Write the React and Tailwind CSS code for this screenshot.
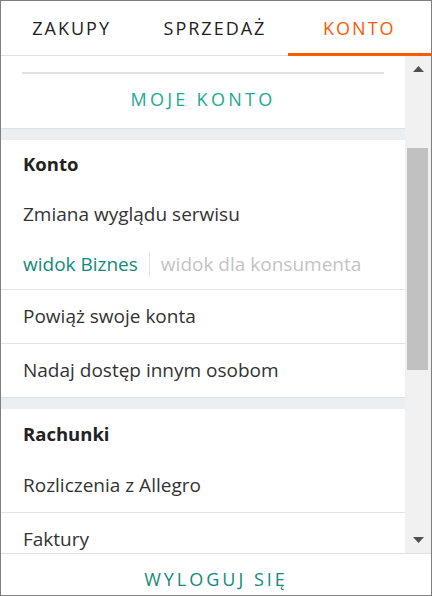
import React from "react";

const tabs = [
  { label: "ZAKUPY", active: false },
  { label: "SPRZEDAŻ", active: false },
  { label: "KONTO", active: true },
];

const Tabs = () => (
  <div className="grid grid-cols-3 h-[55px] border-b border-[#e0e0e0] shrink-0">
    {tabs.map((t) => (
      <div
        key={t.label}
        className={
          t.active
            ? "flex items-center justify-center text-[18px] tracking-[2px] text-[#ff5a00] border-b-[3px] border-[#ff5a00] -mb-px pt-[2px]"
            : "flex items-center justify-center text-[18px] tracking-[2px] text-[#222222] pr-[2px]"
        }
      >
        {t.label}
      </div>
    ))}
  </div>
);

const Scrollbar = () => (
  <div className="w-[26px] shrink-0 bg-[#f1f1f1] flex flex-col">
    <div className="h-[26px] flex items-center justify-center">
      <svg width="11" height="6" viewBox="0 0 11 6">
        <polygon points="5.5,0 11,6 0,6" fill="#505050" />
      </svg>
    </div>
    <div className="flex-1 pl-[2px] pr-[3px]">
      <div className="mt-[66px] h-[222px] bg-[#c1c1c1]" />
    </div>
    <div className="h-[26px] flex items-center justify-center">
      <svg width="11" height="6" viewBox="0 0 11 6">
        <polygon points="0,0 11,0 5.5,6" fill="#505050" />
      </svg>
    </div>
  </div>
);

const Band = () => (
  <div className="h-[12px] bg-[#eceff1] border-t border-[#dfe1e3]" />
);

const App = () => {
  return (
    <div
      className="w-[432px] h-[596px] border border-[#7f7f7f] bg-white flex flex-col overflow-hidden"
      style={{ fontFamily: "'Open Sans', 'Noto Sans', sans-serif" }}
    >
      <Tabs />

      <div className="flex flex-1 min-h-0">
        <div className="flex-1 overflow-hidden">
          <div className="mx-[21px] mt-[16px] h-[2px] bg-[#e1e1e1]" />
          <div className="h-[54px] pb-[3px] flex items-center justify-center text-[18px] tracking-[3.3px] text-[#1aa994]">
            MOJE KONTO
          </div>
          <Band />

          {/* Konto */}
          <div className="h-[48px] flex items-center px-[22px] text-[18.5px] font-bold text-[#222222]">
            Konto
          </div>
          <div className="h-[52px] flex items-center px-[22px] text-[19px] text-[#333333]">
            Zmiana wyglądu serwisu
          </div>
          <div className="h-[50px] flex items-center px-[22px] text-[19px] border-b border-[#e5e5e5]">
            <span className="text-[#138a77]">widok Biznes</span>
            <span className="mx-[11px] w-px h-[24px] bg-[#e2e2e2]" />
            <span className="text-[#c4c4c4]">widok dla konsumenta</span>
          </div>
          <div className="h-[54px] flex items-center px-[22px] text-[19px] text-[#333333] border-b border-[#e5e5e5]">
            Powiąż swoje konta
          </div>
          <div className="h-[53px] flex items-center px-[22px] text-[19px] text-[#333333]">
            Nadaj dostęp innym osobom
          </div>
          <Band />

          {/* Rachunki */}
          <div className="h-[50px] flex items-center px-[22px] text-[18.5px] font-bold text-[#222222]">
            Rachunki
          </div>
          <div className="h-[54px] flex items-center px-[22px] text-[19px] text-[#333333] border-b border-[#e5e5e5]">
            Rozliczenia z Allegro
          </div>
          <div className="h-[53px] flex items-center px-[22px] text-[19px] text-[#333333]">
            Faktury
          </div>
        </div>
        <Scrollbar />
      </div>

      <div className="h-[42px] shrink-0 border-t border-[#e0e0e0] flex justify-center pt-[13px]">
        <span className="text-[18px] leading-[24px] tracking-[3px] text-[#138a77]">
          WYLOGUJ SIĘ
        </span>
      </div>
    </div>
  );
};

export default App;
